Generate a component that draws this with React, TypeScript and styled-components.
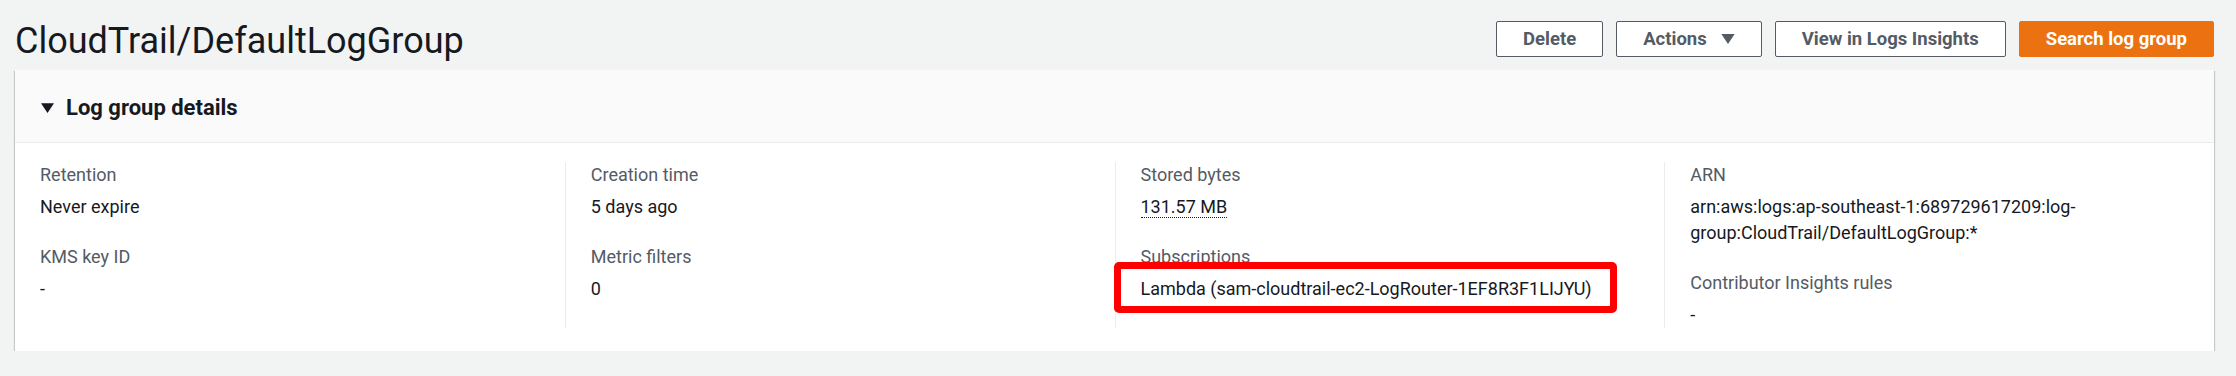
import React from 'react'
import styled, { createGlobalStyle } from 'styled-components'

const GlobalStyle = createGlobalStyle`
  * {
    box-sizing: border-box;
  }

  body {
    margin: 0;
    background-color: #f2f3f3;
    font-family: Roboto, 'Noto Sans', 'Liberation Sans', sans-serif;
    color: #16191f;
  }
`

const Page = styled.div`
  padding: 19px 22px 0 15px;
`

const HeaderRow = styled.div`
  display: flex;
  justify-content: space-between;
  align-items: flex-start;
  margin-bottom: 7px;
`

const Title = styled.h1`
  margin: 0;
  font-size: 36px;
  line-height: 44px;
  font-weight: 400;
  color: #16191f;
`

const Actions = styled.div`
  display: flex;
  gap: 13px;
  padding-top: 2px;
`

const Button = styled.button<{ primary?: boolean }>`
  display: flex;
  align-items: center;
  gap: 14px;
  height: 36px;
  padding: 0 26px;
  border: 1px solid ${(props) => (props.primary ? '#ec7211' : '#545b64')};
  border-radius: 2px;
  background-color: ${(props) => (props.primary ? '#ec7211' : '#ffffff')};
  color: ${(props) => (props.primary ? '#ffffff' : '#545b64')};
  font-family: inherit;
  font-size: 18.5px;
  font-weight: 700;
  line-height: 22px;
  cursor: pointer;
`

const Card = styled.div`
  background-color: #ffffff;
  box-shadow:
    0 1px 1px 0 rgba(0, 28, 36, 0.3),
    1px 1px 1px 0 rgba(0, 28, 36, 0.15),
    -1px 1px 1px 0 rgba(0, 28, 36, 0.15);
`

const CardHeader = styled.div`
  display: flex;
  align-items: center;
  height: 73px;
  padding: 4px 26px 0;
  background-color: #fafafa;
  border-bottom: 1px solid #eaeded;
`

const HeaderTitle = styled.h2`
  margin: 0 0 0 12px;
  font-size: 22px;
  line-height: 26px;
  font-weight: 700;
  color: #16191f;
`

const CardBody = styled.div`
  display: grid;
  grid-template-columns: repeat(4, 1fr);
  padding: 19px 0 23px;
`

const Column = styled.div<{ divided?: boolean }>`
  display: flex;
  flex-direction: column;
  gap: 24px;
  padding: 0 25px;
  border-left: ${(props) => (props.divided ? '1px solid #eaeded' : 'none')};
`

const Field = styled.div`
  display: flex;
  flex-direction: column;
  gap: 6px;
`

const Label = styled.div`
  font-size: 18px;
  line-height: 26px;
  color: #545b64;
`

const Value = styled.div`
  font-size: 18px;
  line-height: 26px;
  color: #16191f;
`

const Dotted = styled.span`
  border-bottom: 1px dotted #16191f;
`

const Highlighted = styled.span`
  position: relative;
  display: inline-block;

  &::after {
    content: '';
    position: absolute;
    top: -14px;
    right: -25px;
    bottom: -11px;
    left: -27px;
    border: 7px solid #ff0000;
    border-radius: 5px;
  }
`

const Caret = ({ width, height }: { width: number; height: number }) => (
  <svg width={width} height={height} viewBox="0 0 12 9" fill="currentColor">
    <polygon points="0,0 12,0 6,9" />
  </svg>
)

const columns = [
  [
    { label: 'Retention', value: 'Never expire' },
    { label: 'KMS key ID', value: '-' },
  ],
  [
    { label: 'Creation time', value: '5 days ago' },
    { label: 'Metric filters', value: '0' },
  ],
  [
    { label: 'Stored bytes', value: <Dotted>131.57 MB</Dotted> },
    {
      label: 'Subscriptions',
      value: (
        <Highlighted>
          Lambda (sam-cloudtrail-ec2-LogRouter-1EF8R3F1LIJYU)
        </Highlighted>
      ),
    },
  ],
  [
    {
      label: 'ARN',
      value:
        'arn:aws:logs:ap-southeast-1:689729617209:log-group:CloudTrail/DefaultLogGroup:*',
    },
    { label: 'Contributor Insights rules', value: '-' },
  ],
]

function App() {
  return (
    <>
      <GlobalStyle />
      <Page>
        <HeaderRow>
          <Title>CloudTrail/DefaultLogGroup</Title>
          <Actions>
            <Button>Delete</Button>
            <Button>
              Actions
              <Caret width={14} height={10} />
            </Button>
            <Button>View in Logs Insights</Button>
            <Button primary>Search log group</Button>
          </Actions>
        </HeaderRow>
        <Card>
          <CardHeader>
            <Caret width={13} height={10} />
            <HeaderTitle>Log group details</HeaderTitle>
          </CardHeader>
          <CardBody>
            {columns.map((fields, i) => (
              <Column key={i} divided={i > 0}>
                {fields.map((field) => (
                  <Field key={field.label}>
                    <Label>{field.label}</Label>
                    <Value>{field.value}</Value>
                  </Field>
                ))}
              </Column>
            ))}
          </CardBody>
        </Card>
      </Page>
    </>
  )
}

export default App
